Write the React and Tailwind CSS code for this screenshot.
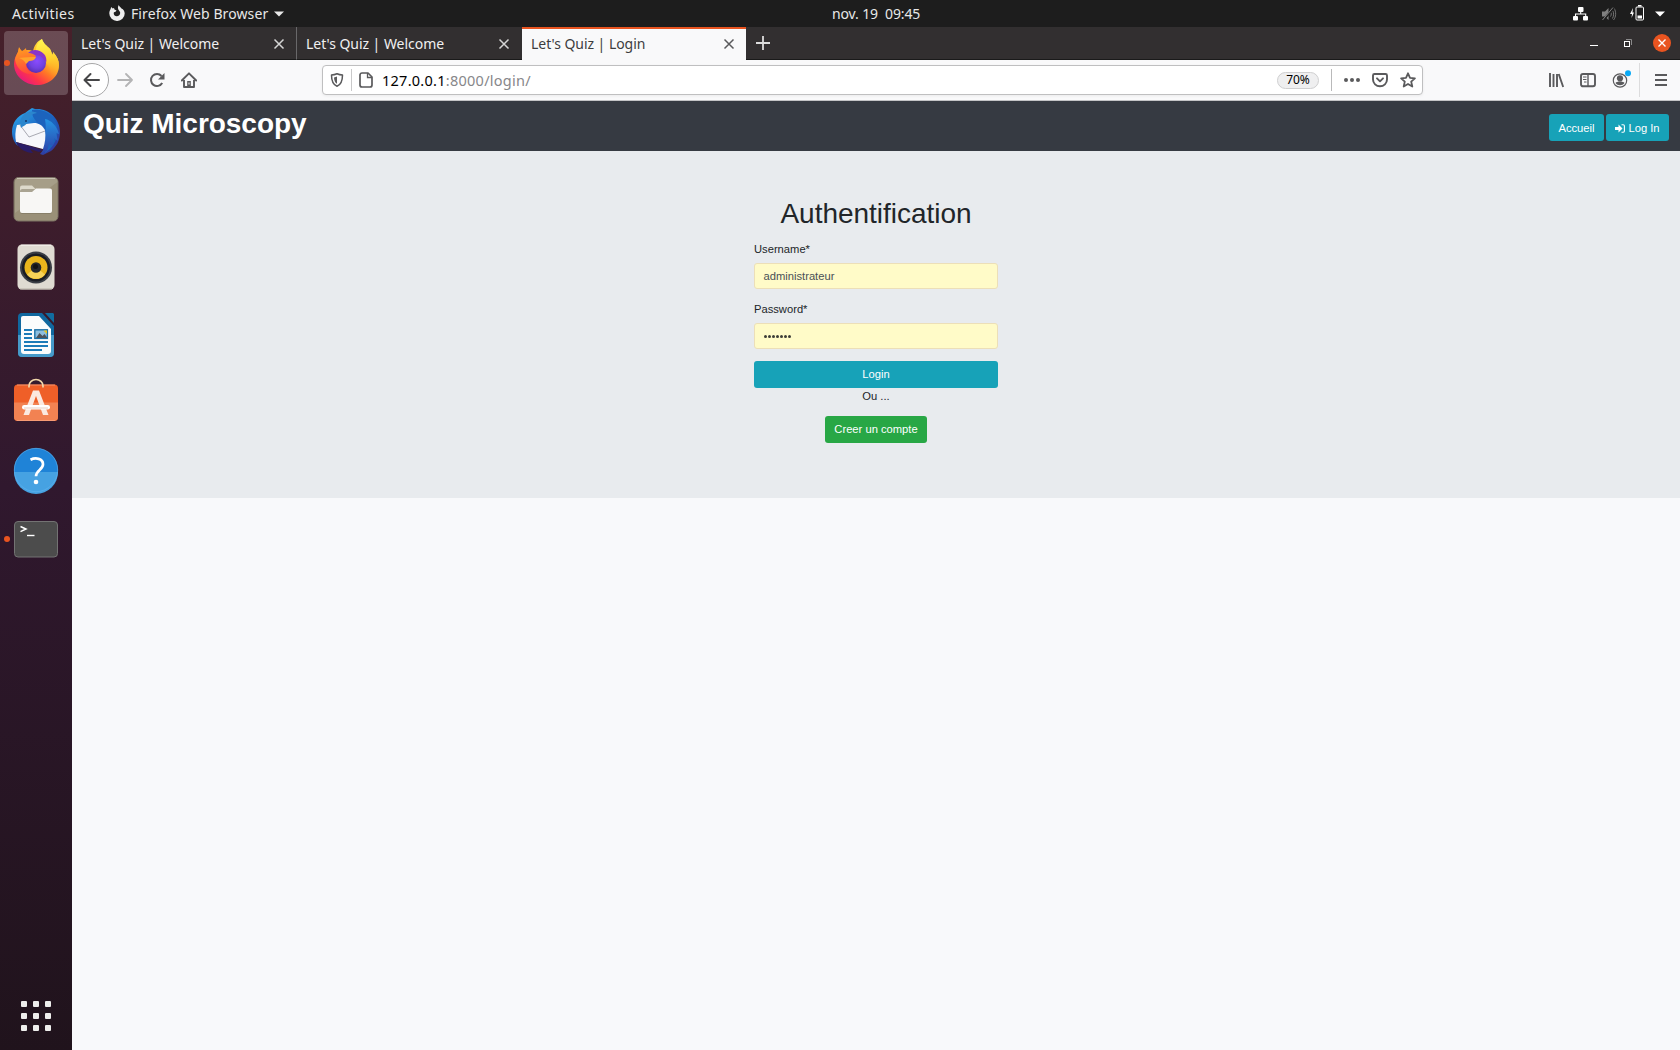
import React from 'react';

const Svg = ({ w = 16, h, vb, className = '', children }) => (
  <svg width={w} height={h || w} viewBox={vb || `0 0 ${w} ${h || w}`} fill="none" className={`block shrink-0 ${className}`}>
    {children}
  </svg>
);

const FirefoxIcon = () => (
  <Svg w={48}>
    <defs>
      <linearGradient id="ffBody" x1="40" y1="6" x2="10" y2="44" gradientUnits="userSpaceOnUse">
        <stop offset="0" stopColor="#fff44f" />
        <stop offset=".3" stopColor="#ffc02a" />
        <stop offset=".52" stopColor="#ff7a25" />
        <stop offset=".75" stopColor="#ff3647" />
        <stop offset="1" stopColor="#e31587" />
      </linearGradient>
      <linearGradient id="ffTail" x1="36" y1="1" x2="40" y2="38" gradientUnits="userSpaceOnUse">
        <stop offset="0" stopColor="#fff44f" />
        <stop offset=".5" stopColor="#ffd02f" />
        <stop offset="1" stopColor="#ff8a1e" stopOpacity="0" />
      </linearGradient>
      <radialGradient id="ffGlobe" cx="25" cy="22" r="12" gradientUnits="userSpaceOnUse">
        <stop offset="0" stopColor="#8a4bff" />
        <stop offset=".6" stopColor="#7142e0" />
        <stop offset="1" stopColor="#5b2fb5" />
      </radialGradient>
      <linearGradient id="ffHead" x1="8" y1="8" x2="14" y2="34" gradientUnits="userSpaceOnUse">
        <stop offset="0" stopColor="#ffa01e" />
        <stop offset="1" stopColor="#ff4a3c" />
      </linearGradient>
    </defs>
    <path d="M30 0c1 4 5 7 8 10 1 2 2 4 2 6 1-1 1-2 1-3 4 4 6 9 6 13 0 12-10 20-22 20S2 37 2 25c0-5 2-9 4-12l1-4c1 1 2 2 3 4 3-3 8-2 11-1 1-5 4-10 9-12z" fill="url(#ffBody)" />
    <path d="M30 0c1 4 5 7 8 10 1 2 2 4 2 6 1-1 1-2 1-3 4 4 6 9 6 13 0 8-4 13-9 16 2-6 1-13-3-17-4-5-11-6-11-14 0-4 2-8 6-11z" fill="url(#ffTail)" />
    <circle cx="24" cy="24" r="10" fill="url(#ffGlobe)" />
    <path d="M16 14c4-4 11-4 16 1 2 2 3 6 2 9-2-5-5-8-11-8z" fill="#8a35c8" />
    <path d="M3 20c1-3 2-5 3-7l1-5c1 2 2 3 3 4 2-1 3-2 4-3 0 2 1 4 2 5 3 0 6 1 8 3-1 3-4 4-7 4-1 1-1 2-3 3-1 4 2 9 7 10-8 3-17-4-18-14z" fill="url(#ffHead)" />
    <path d="M7 19c6-1 12-1 17-1-1 3-4 4-7 4l-3 3c-1-3-4-5-7-6z" fill="#ffa42c" />
  </Svg>
);

const ThunderbirdIcon = () => (
  <Svg w={48} className="relative top-px">
    <defs>
      <linearGradient id="tbBody" x1="10" y1="4" x2="40" y2="46" gradientUnits="userSpaceOnUse">
        <stop offset="0" stopColor="#2a9fe6" />
        <stop offset=".45" stopColor="#1b5fc0" />
        <stop offset="1" stopColor="#33379c" />
      </linearGradient>
      <linearGradient id="tbWing" x1="36" y1="10" x2="36" y2="46" gradientUnits="userSpaceOnUse">
        <stop offset="0" stopColor="#2596e4" />
        <stop offset="1" stopColor="#2c3fa8" />
      </linearGradient>
    </defs>
    <path d="M17 2l3-2 3 1c14-1 25 10 25 23 0 9-4 15-9 19l-8 4-3-1 4-5L4 33l2 5C2 35 0 29 0 24 0 15 5 8 13 5z" fill="url(#tbBody)" />
    <path d="M20 2c8-2 17 2 22 9 5 8 5 21-4 30l-5 4c2-7 0-20-5-27-4-5-9-10-8-16z" fill="#1c63bd" />
    <path d="M33 11c6 1 12 7 14 15l-3-1 2 8-4-3-1 8-4-2-2 7-5 2c3-8 5-22 3-34z" fill="url(#tbWing)" />
    <path d="M5 17l9-1 8-1c5 0 8 2 11 7 1 7 0 13-2 19L4 34c-1-5-1-11 1-17z" fill="#f6f7fb" />
    <path d="M8 17l9 12 16-6" stroke="#a8a9b2" strokeWidth="1" />
    <path d="M4 34l27 8-4 2-9-3 3 4C14 45 7 41 4 34z" fill="#291c67" />
    <path d="M8 14c2-9 10-13 17-9-6 1-7 4-8 7-2 5-6 6-8 8z" fill="#2b86cd" />
    <circle cx="14" cy="13" r="1" fill="#14356a" />
  </Svg>
);

const FilesIcon = () => (
  <Svg w={48}>
    <rect x="2" y="2.500" width="44" height="43.500" rx="4.500" fill="#9a9078" stroke="#7c7465" />
    <path d="M6.500 3h35a4 4 0 0 1 4 4L3 38V7a4 4 0 0 1 3.500-4z" fill="#a69e88" />
    <path d="M5 3.500h38" stroke="#c8c2b2" />
    <path d="M8 12.500a2 2 0 0 1 2-2h10l4 4v6H8z" fill="#dedacb" />
    <rect x="8" y="14" width="32" height="25" rx="2.500" fill="#756d5a" opacity=".5" />
    <path d="M8 17h12l4-3.500h14a2 2 0 0 1 2 2V36a2 2 0 0 1-2 2H10a2 2 0 0 1-2-2z" fill="#f8f7f5" />
  </Svg>
);

const MusicIcon = () => (
  <Svg w={48}>
    <rect x="5.500" y="1.500" width="37" height="45" rx="4.500" fill="#dfdbd2" />
    <path d="M9 2.200h30" stroke="#f6f4f0" />
    <path d="M8 46h32" stroke="#b4afa5" />
    <circle cx="24" cy="24.500" r="16" fill="#3a3e45" />
    <circle cx="24" cy="24.500" r="14" fill="#1a1d24" />
    <circle cx="24" cy="24.500" r="11.500" fill="#e9b51c" />
    <path d="M15 31.500a11.500 11.500 0 0 0 18 0L24 24z" fill="#f6d257" />
    <circle cx="24" cy="24.500" r="5.300" fill="#25272b" />
    <circle cx="23.500" cy="23.500" r="2.500" fill="#111214" />
  </Svg>
);

const WriterIcon = () => (
  <Svg w={48}>
    <path d="M10 2h20l12 13v27a4 4 0 0 1-4 4H10a4 4 0 0 1-4-4V6a4 4 0 0 1 4-4z" fill="#10689f" />
    <path d="M6 24h36v18a4 4 0 0 1-4 4H10a4 4 0 0 1-4-4z" fill="#469ac9" />
    <path d="M11 5h16l12 13v22a3 3 0 0 1-3 3H12a3 3 0 0 1-3-3V7a2 2 0 0 1 2-2z" fill="#fbfcfc" />
    <path d="M33 2h8l1 1v9z" fill="#116c9f" />
    <path d="M12 19h8M12 23h8M12 27h8M12 31h24M12 35h24M12 39h18" stroke="#1c7bb8" strokeWidth="1.900" />
    <rect x="22.800" y="18.800" width="12.600" height="8.600" fill="#8dbede" stroke="#1c70a5" strokeWidth="1.400" />
    <path d="M24 27l3.500-5 3 3 2-2 3 4z" fill="#4c535b" />
    <path d="M31.500 19.500H35v3.500z" fill="#e9c51a" />
  </Svg>
);

const SoftwareIcon = () => (
  <Svg w={48} className="relative -top-px">
    <rect x="2" y="6.500" width="44" height="36.500" rx="4" fill="#ef5f28" />
    <path d="M2 24.500h44V39a4 4 0 0 1-4 4H6a4 4 0 0 1-4-4z" fill="#f28252" />
    <path d="M5 7h38M5 42.500h38" stroke="#f7a27d" strokeWidth=".8" />
    <path d="M17 9.500V8a7 6.500 0 0 1 14 0v1.500" stroke="#f2d8ab" strokeWidth="1.700" />
    <path d="M21 12.500h6l9.500 24.500h-5.500l-7-19-7 19h-5.500z" fill="#fbe9e0" />
    <rect x="10" y="27" width="28" height="4.500" rx="2.200" fill="#fff" />
    <path d="M12 30h24" stroke="#e8cfc5" />
  </Svg>
);

const HelpIcon = () => (
  <Svg w={48} className="relative -top-px">
    <circle cx="24" cy="24" r="22" fill="#1f83d7" />
    <path d="M2 26h44a22 22 0 0 1-44 0z" fill="#46a2e2" />
    <circle cx="24" cy="24" r="21.700" stroke="#62b3ee" strokeWidth=".6" />
    <path d="M18.500 13.800c5-2.500 12.500-1.500 12.500 4.500 0 5.500-7 6-7 12" stroke="#fff" strokeWidth="2.700" />
    <circle cx="24" cy="36" r="2.300" fill="#fff" />
  </Svg>
);

const TerminalIcon = () => (
  <Svg w={48}>
    <rect x="2.500" y="6.500" width="43" height="35.500" rx="3.500" fill="#4c4c4c" stroke="#737373" />
    <path d="M8.500 11.500l5.500 2.500-5.500 2.700" stroke="#fff" strokeWidth="1.500" />
    <path d="M15 20.500h7.500" stroke="#fff" strokeWidth="1.400" />
  </Svg>
);

const apps = [
  { Icon: FirefoxIcon, running: true, active: true },
  { Icon: ThunderbirdIcon },
  { Icon: FilesIcon },
  { Icon: MusicIcon },
  { Icon: WriterIcon },
  { Icon: SoftwareIcon },
  { Icon: HelpIcon },
  { Icon: TerminalIcon, running: true },
];

function TopBar() {
  return (
    <header className="flex h-[27px] items-center bg-[#1d1d1d] text-[14px] leading-[27px] text-[#e8e8e8]">
      <div className="flex w-[832px] items-center">
        <span className="ml-[12px] w-[97px] whitespace-nowrap tracking-[0.42px]">Activities</span>
        <Svg w={16} className="mb-px">
          <path d="M9.800 0c.3 1.500 1.700 2.300 2.700 3.400 2 .7 3.200 2.800 3.200 5A7.500 7.500 0 0 1 8 16 7.600 7.600 0 0 1 .3 8.500c0-2 .6-3.400 1.300-4.500L2.200 2l1.500 1.500L5 3l.5 1.600 2 1-1 1.200-1.500.4c-.9 2 .6 4 2.700 4 2.500 0 4-2 3.300-4.200C10.500 5.500 7.500 4 9.800 0z" fill="#ececec" />
        </Svg>
        <span className="ml-[6px] w-[137px] whitespace-nowrap tracking-[0.1px]">Firefox Web Browser</span>
        <Svg w={10} h={6} className="ml-[6px]"><path d="M0 .5h10L5 5.500z" fill="#e8e8e8" /></Svg>
      </div>
      <span className="w-[90px] whitespace-pre tracking-[-0.12px]">nov. 19  09:45</span>
      <div className="flex flex-1 items-center justify-end pr-[15px]">
        <Svg w={16} h={14} className="mr-[12px]">
          <rect x="5" y="0" width="5.500" height="5" rx="1" fill="#fff" />
          <rect x="0" y="9" width="5" height="4.500" rx="1" fill="#fff" />
          <rect x="10" y="9" width="5" height="4.500" rx="1" fill="#fff" />
          <path d="M7.700 4v3M2.500 10V7h10.200v3" stroke="#fff" strokeWidth="1.100" />
        </Svg>
        <Svg w={16} h={16} className="mr-[12px]">
          <path d="M1 5.500h3L7.500 2v12L4 10.500H1z" fill="#808080" />
          <path d="M9.500 6c1 1 1 3 0 4.500M11.500 4.500c1.500 2 1.500 5 0 8M13 2c2.500 4 2 9-.5 12" stroke="#747474" strokeWidth="1" />
          <path d="M2 14.500L13 1.500" stroke="#1d1d1d" strokeWidth="2.200" />
          <path d="M1.500 14L12 1.500" stroke="#808080" strokeWidth="1" />
        </Svg>
        <Svg w={16} h={16} className="mr-[10px] mb-px">
          <path d="M4 3L1 9h2l-.5 4L5 7.500H3.500z" fill="#fff" />
          <rect x="7" y="2" width="7.500" height="13" rx="1" stroke="#fff" />
          <rect x="9" y="0" width="3.500" height="1.500" fill="#fff" />
          <rect x="8.500" y="10.500" width="4.500" height="3" fill="#fff" />
        </Svg>
        <Svg w={10} h={6}><path d="M0 .5h10L5 5.500z" fill="#fff" /></Svg>
      </div>
    </header>
  );
}

function Dock() {
  return (
    <aside className="flex w-[72px] flex-col bg-linear-to-b from-[#46202a] via-[#30182e] via-45% to-[#20131c] pt-[2px]">
      {apps.map(({ Icon, running, active }, i) => (
        <div key={i} className="flex h-[68px] items-center">
          <span className={`ml-1 size-[6px] shrink-0 rounded-full ${running ? 'bg-[#e95420]' : ''} relative z-10`} />
          <div className={`-ml-[6px] flex h-[64px] w-[64px] items-center justify-center rounded-[4px] ${active ? 'bg-white/20' : ''}`}>
            <Icon />
          </div>
        </div>
      ))}
      <div className="mt-auto mb-[19px] ml-[21px] grid w-[30px] grid-cols-3 gap-[6px]">
        {Array.from({ length: 9 }, (_, i) => (
          <span key={i} className="size-[6px] rounded-[1px] bg-[#eeeeec]" />
        ))}
      </div>
    </aside>
  );
}

function Tab({ title, active, sep }) {
  return (
    <div className={active
      ? 'flex h-[33px] w-[224px] items-center border-t-2 border-[#e95420] bg-[#f9f9fa] pb-[2px] pl-[9px] pr-[11px] text-[#3d3d3f]'
      : `flex h-[33px] items-center border-b border-[#1a1a1a] pl-[9px] text-[#f0f0f0] ${sep ? 'w-[225px] border-r border-r-[#69686a] pr-[11px]' : 'w-[225px] pr-[12px]'}`}>
      <span className="flex-1 whitespace-nowrap text-[14px] tracking-[-0.04px]">{title}</span>
      <Svg w={12} className="mt-px"><path d="M1.500 1.500l9 9M10.500 1.500l-9 9" stroke={active ? '#5a5a5c' : '#d5d5d5'} strokeWidth="1.500" /></Svg>
    </div>
  );
}

function TabBar() {
  return (
    <div className="flex h-[33px] bg-[#322f30]">
      <Tab title="Let's Quiz | Welcome" sep />
      <Tab title="Let's Quiz | Welcome" />
      <Tab title="Let's Quiz | Login" active />
      <div className="flex flex-1 items-center justify-end border-b border-[#1a1a1a]">
        <Svg w={14} className="ml-[10px]"><path d="M7 0v14M0 7h14" stroke="#dcdcdc" strokeWidth="1.800" /></Svg>
        <span className="flex-1" />
        <Svg w={8} h={6} className="mr-[26px]"><path d="M0 5.500h8" stroke="#fff" /></Svg>
        <Svg w={8} className="mr-[21px]">
          <path d="M2 .5h5.500V6" stroke="#8b8a8b" />
          <rect x=".5" y="2.500" width="5" height="5" stroke="#fff" />
        </Svg>
        <Svg w={18} className="mr-[9px]">
          <circle cx="9" cy="9" r="9" fill="#e95420" />
          <path d="M5.500 5.500l7 7M12.500 5.500l-7 7" stroke="#fff" strokeWidth="1.400" />
        </Svg>
      </div>
    </div>
  );
}

function ToolBar() {
  const c = '#5a5a5c';
  return (
    <div className="flex h-[41px] items-center border-b border-[#c4c4c6] bg-[#f9f9fa]">
      <Svg w={34} className="ml-[3px]">
        <circle cx="17" cy="17" r="16.500" fill="#fff" stroke="#a6a6a7" />
        <path d="M24 17H10M15.500 11L9.500 17l6 6" stroke="#464648" strokeWidth="2" strokeLinecap="round" strokeLinejoin="round" />
      </Svg>
      <Svg w={16} className="ml-[8px]"><path d="M1 8h14M9 2l6 6-6 6" stroke="#b4b4b5" strokeWidth="1.800" strokeLinecap="round" strokeLinejoin="round" /></Svg>
      <Svg w={16} className="ml-[16px]">
        <path d="M13.200 11A6 6 0 1 1 12.500 4" stroke={c} strokeWidth="2" />
        <path d="M15.500 1v6.500H9z" fill={c} />
      </Svg>
      <Svg w={16} className="ml-[16px]">
        <path d="M.8 8.500L8 1.300l7.200 7.200" stroke={c} strokeWidth="1.900" strokeLinecap="round" strokeLinejoin="round" />
        <path d="M3 8v7h10V8" stroke={c} strokeWidth="1.900" strokeLinejoin="round" />
        <path d="M6.200 15V9h3.600v6z" fill={c} /><rect x="7.500" y="10.500" width="1" height="2" fill="#fff" />
      </Svg>

      <div className="ml-[125px] flex h-[30px] w-[1101px] items-center rounded-[4px] border border-[#bfbfc0] bg-white pr-[6px] shadow-[0_1px_3px_rgba(0,0,0,0.06)]">
        <Svg w={14} className="ml-[7px]">
          <path d="M7 .8c2 .9 3.600 1.200 5.500 1.300 0 5.500-1 9.500-5.500 11.200C2.500 11.600 1.500 7.600 1.500 2.100 3.400 2 5 1.700 7 .8z" stroke={c} strokeWidth="1.500" strokeLinejoin="round" />
          <path d="M7 3.500v7.200C4.800 9.500 4.200 7.500 4 4.400 5.200 4.200 6 4 7 3.500z" fill={c} />
        </Svg>
        <span className="ml-[7px] h-[22px] w-px bg-[#c9c9ca]" />
        <Svg w={14} h={16} className="ml-[7px]">
          <path d="M9 1H3a2 2 0 0 0-2 2v10a2 2 0 0 0 2 2h8a2 2 0 0 0 2-2V5z" stroke={c} strokeWidth="1.700" strokeLinejoin="round" />
          <path d="M8.500 1v4.500H13" stroke={c} strokeWidth="1.300" />
        </Svg>
        <span className="ml-[9px] mt-[2px] flex-1 whitespace-nowrap text-[14.500px] tracking-[0.26px] text-[#87878a]"><span className="text-black">127.0.0.1</span>:8000/login/</span>
        <span className="flex h-[17px] w-[42px] items-center justify-center rounded-full border border-[#cfcfd0] bg-[#efeff0] text-[12px] text-black">70%</span>
        <span className="ml-[12px] h-[22px] w-px bg-[#b9b9ba]" />
        <Svg w={16} h={4} className="ml-[12px]"><circle cx="2" cy="2" r="2" fill={c} /><circle cx="8" cy="2" r="2" fill={c} /><circle cx="14" cy="2" r="2" fill={c} /></Svg>
        <Svg w={16} className="ml-[12px]">
          <path d="M2.500 2h11a1.500 1.500 0 0 1 1.500 1.500V7.500a7 6.800 0 0 1-14 0V3.500A1.500 1.500 0 0 1 2.500 2z" stroke={c} strokeWidth="1.900" />
          <path d="M5 6.300l3 3 3-3" stroke={c} strokeWidth="1.900" strokeLinecap="round" strokeLinejoin="round" />
        </Svg>
        <Svg w={16} className="ml-[12px]">
          <path d="M8 1.300l2 4.500 4.900.5-3.700 3.300 1.100 4.900L8 12l-4.300 2.500 1.100-4.900L1.100 6.300 6 5.800z" stroke={c} strokeWidth="1.800" strokeLinejoin="round" />
        </Svg>
      </div>

      <span className="flex-1" />
      <Svg w={16}><path d="M2 1v14M5.500 2v13M9 2v13M10.700 2l4.500 13" stroke={c} strokeWidth="1.900" /></Svg>
      <Svg w={16} className="ml-[16px]">
        <rect x="1" y="2" width="14" height="12.300" rx="2" stroke={c} strokeWidth="1.900" />
        <path d="M8 2v12" stroke={c} strokeWidth="1.400" /><path d="M3 5h3.500M3 7.500h3.500M4 10h2.500" stroke={c} />
      </Svg>
      <Svg w={20} h={20} className="ml-[16px]">
        <circle cx="8" cy="10.500" r="6.700" stroke={c} strokeWidth="1.200" />
        <circle cx="8" cy="8.300" r="3.100" fill={c} />
        <path d="M3.500 13c1-2 8-2 9 0-2 3-7 3-9 0z" fill={c} />
        <circle cx="16" cy="3.200" r="3" fill="#0aaaf5" />
      </Svg>
      <span className="ml-[7px] h-[34px] w-px bg-[#dcdcdd]" />
      <Svg w={12} h={12} className="ml-[15px] mr-[13px]"><path d="M0 1h12M0 6h12M0 11h12" stroke={c} strokeWidth="1.900" /></Svg>
    </div>
  );
}

function Field({ label, children }) {
  return (
    <div className="flex flex-col">
      <span className="h-[17px] text-[#212529]">{label}</span>
      <div className="mt-[5px] flex h-[26px] w-[244px] items-center rounded-[3px] border border-[#ecdfb8] bg-[#fffbc8] pl-[8.500px] text-[#495057]">{children}</div>
    </div>
  );
}

function Page() {
  return (
    <main className="flex flex-1 flex-col bg-[#f8f9fb] font-['Liberation_Sans',sans-serif] text-[11.200px] leading-[17px]">
      <nav className="flex h-[50px] items-start bg-[#363a42] pr-[11px] text-white">
        <h1 className="ml-[11px] mt-[6px] flex-1 text-[28px] font-bold leading-[34px] tracking-[-0.03px]">Quiz Microscopy</h1>
        <a className="mt-[13px] flex h-[27px] w-[55px] items-center justify-center rounded-[3px] bg-[#17a2b8] pt-[2px]">Accueil</a>
        <a className="ml-[2px] mt-[13px] flex h-[27px] w-[63px] items-center justify-center rounded-[3px] bg-[#17a2b8] pt-[2px]">
          <Svg w={10} h={9} className="mr-[3px]">
            <path d="M0 3h3.500V.5L7.500 4.500l-4 4V6H0z" fill="#fff" />
            <path d="M6.500.8h1.700a1.200 1.200 0 0 1 1.200 1.200v5a1.200 1.200 0 0 1-1.200 1.200H6.500" stroke="#fff" strokeWidth="1.100" />
          </Svg>
          Log In
        </a>
      </nav>
      <section className="flex h-[347px] flex-col items-center bg-[#e8ebee] pt-[46px] text-[#212529]">
        <h2 className="text-[28px] leading-[34px] tracking-[-0.02px]">Authentification</h2>
        <div className="mt-[10px] flex flex-col gap-[12px]">
          <Field label="Username*">administrateur</Field>
          <Field label="Password*">
            <span className="flex gap-[1px]">
              {Array.from({ length: 7 }, (_, i) => <span key={i} className="size-[3px] rounded-full bg-[#3d3d38]" />)}
            </span>
          </Field>
        </div>
        <button className="mt-[12px] h-[27px] w-[244px] rounded-[3px] bg-[#17a2b8] text-white">Login</button>
        <span>Ou ...</span>
        <button className="mt-[11px] h-[27px] w-[102px] rounded-[3px] bg-[#28a745] text-white">Creer un compte</button>
      </section>
    </main>
  );
}

export default function App() {
  return (
    <div className="flex h-[1050px] w-[1680px] flex-col overflow-hidden font-['Noto_Sans',sans-serif]">
      <TopBar />
      <div className="flex min-h-0 flex-1">
        <Dock />
        <div className="flex min-w-0 flex-1 flex-col">
          <TabBar />
          <ToolBar />
          <Page />
        </div>
      </div>
    </div>
  );
}
